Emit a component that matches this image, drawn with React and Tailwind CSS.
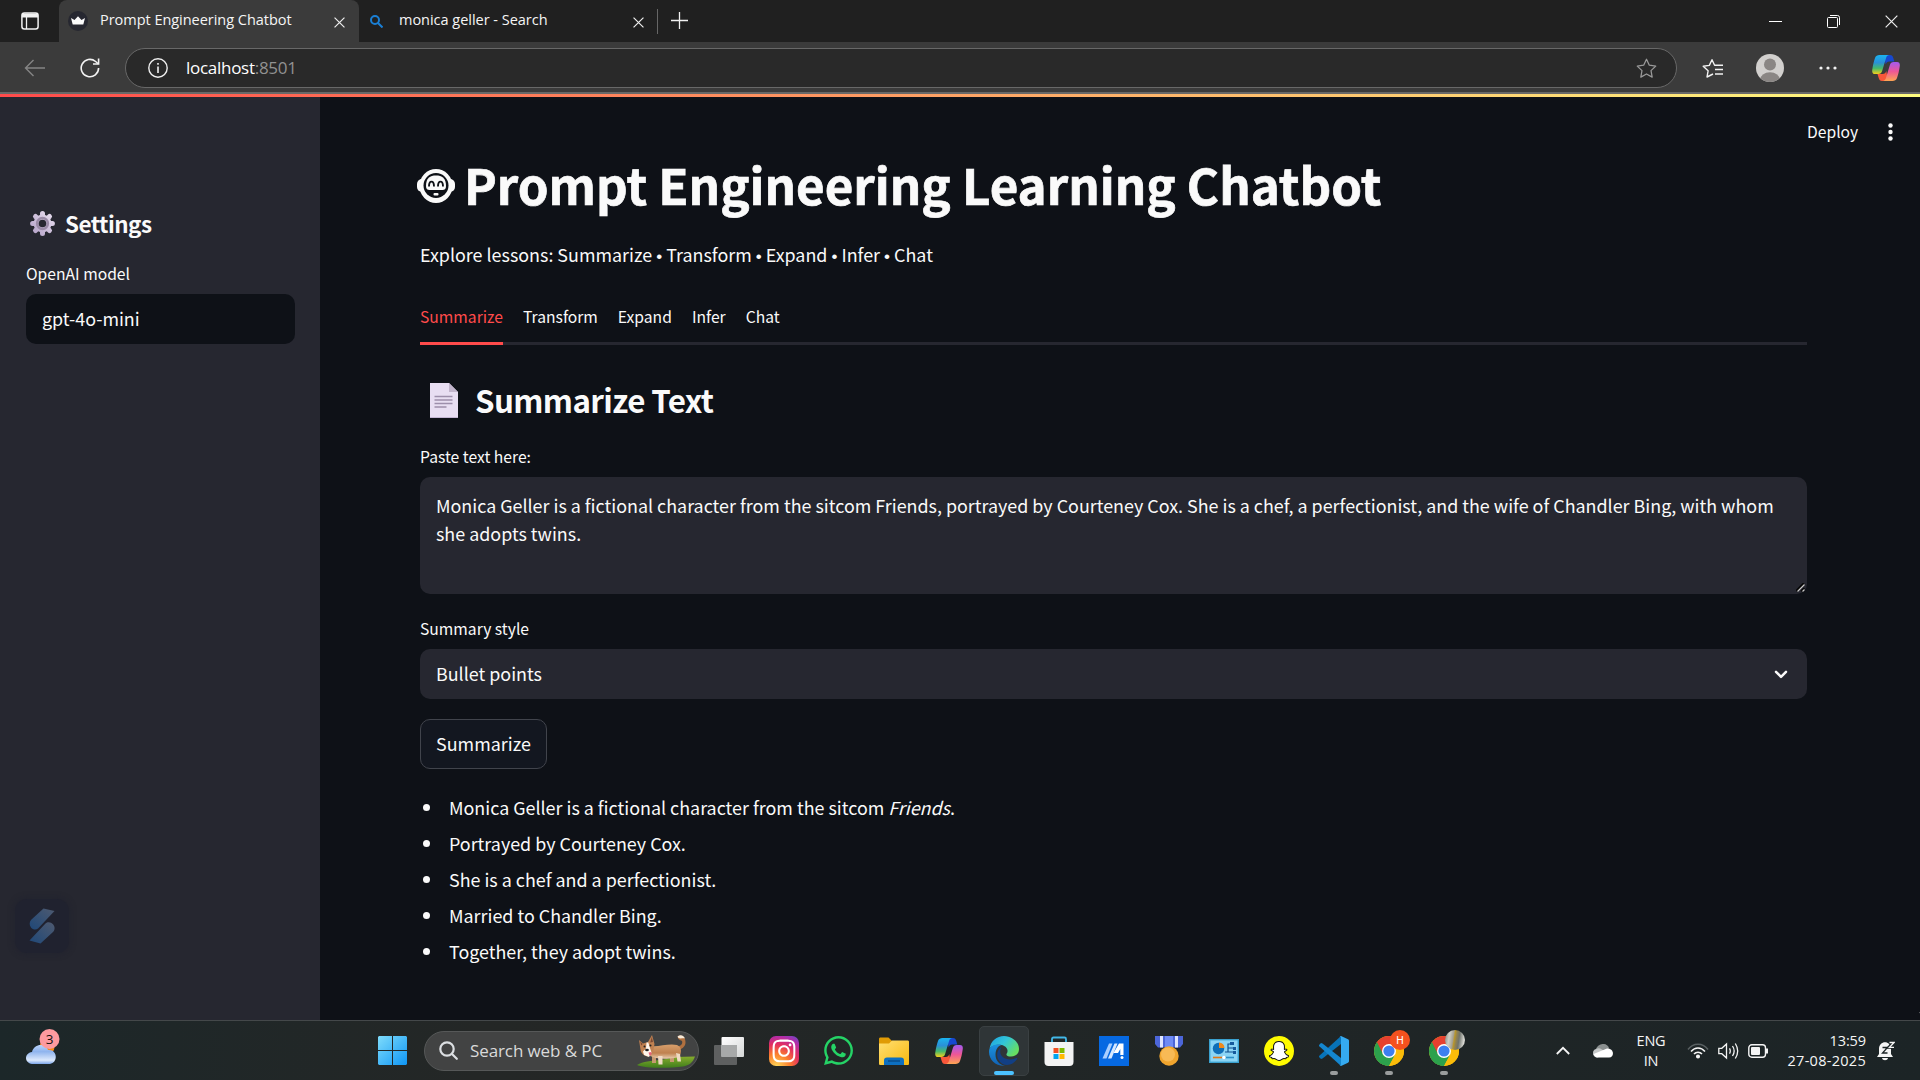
import React from "react";
import { FaInstagram, FaWhatsapp, FaSnapchatGhost, FaEdge } from "react-icons/fa";

const SEGOE = "font-['Open_Sans','Noto_Sans',sans-serif]";
const SOURCE = "font-['Noto_Sans_CJK_SC','Noto_Sans',sans-serif]";

function Close({ size = 11, sw = 1.3 }) {
  return (
    <svg width={size} height={size} viewBox="0 0 12 12" fill="none" stroke="#eee" strokeWidth={sw}>
      <path d="M.6.6 11.4 11.4M11.4.6.6 11.4" />
    </svg>
  );
}

function Copilot({ id, size }) {
  return (
    <svg width={size} height={size} viewBox="0 0 28 28">
      <defs>
        <linearGradient id={id + "a"} x1="0" y1="0" x2="0" y2="1">
          <stop offset="0" stopColor="#1ab4f0" />
          <stop offset=".4" stopColor="#2a90d8" />
          <stop offset=".7" stopColor="#45b96a" />
          <stop offset="1" stopColor="#f5cf1c" />
        </linearGradient>
        <linearGradient id={id + "b"} x1="0" y1="0" x2="0" y2="1">
          <stop offset="0" stopColor="#a35af0" />
          <stop offset=".5" stopColor="#ee5796" />
          <stop offset="1" stopColor="#fda552" />
        </linearGradient>
      </defs>
      <path d="M12 1h6c2 0 2.700 1 3.300 3l1 3.500h-5c-2 0-3 1-3.600 3z" fill="#1748cf" />
      <path d="M16 27h-6c-2 0-2.700-1-3.300-3l-1.200-4h5.200c2 0 3-1 3.600-3z" fill="#f8573a" />
      <path d="M7.500 1H17c-1.800.3-2.500 1.600-3 3.200l-3.800 12.500c-.7 2.200-1.700 3.300-4 3.300H3C.7 20-.2 18.300.3 15.500 1 11 1.700 7.500 3 4c.9-2.200 2.300-3 4.500-3z" fill={`url(#${id}a)`} />
      <path d="M20.500 27H11c1.800-.3 2.500-1.600 3-3.200l3.800-12.500c.7-2.200 1.700-3.300 4-3.300H25c2.300 0 3.200 1.700 2.700 4.500-.7 4.500-1.400 8-2.700 11.500-.9 2.200-2.300 3-4.500 3z" fill={`url(#${id}b)`} />
    </svg>
  );
}

function TabStrip() {
  return (
    <div className="flex h-[42px] bg-[#202020]">
      <div className="flex w-[59px] items-center pl-[21px] pb-[1px]">
        <svg width="18" height="18" viewBox="0 0 18 18" fill="none">
          <rect x=".9" y=".9" width="16.200" height="16.200" rx="2.500" stroke="#f2f2f2" strokeWidth="1.500" />
          <path d="M1 1.500h16v4H1z" fill="#f2f2f2" />
          <path d="M5.500 5v12" stroke="#f2f2f2" strokeWidth="1.300" />
        </svg>
      </div>
      <div className="flex w-[300px] items-center rounded-t-lg bg-[#3b3b3b] pl-[9px]">
        <svg width="20" height="20" viewBox="0 0 20 20">
          <circle cx="10" cy="10" r="10" fill="#262730" />
          <path d="M3 7l3.500 2L10 5.300 13.500 9 17 7l-1.700 6.500H4.700z" fill="#fafafa" />
        </svg>
        <span className="ml-3 w-[225px] pb-[2px] text-[14.5px] tracking-[-0.03px] whitespace-nowrap text-[#f5f5f5]">Prompt Engineering Chatbot</span>
        <span className="mt-0.5 ml-[9px]"><Close size={11} /></span>
      </div>
      <div className="flex w-[297px] items-center pl-[11px]">
        <svg width="13" height="13" viewBox="0 0 13 13" fill="none" stroke="#1a7fd4" strokeWidth="2">
          <circle cx="5" cy="5" r="4" />
          <path d="M8 8l4.500 4.500" />
        </svg>
        <span className="ml-[16px] w-[234px] pb-[2px] text-[14.5px] tracking-[-0.02px] whitespace-nowrap text-[#f5f5f5]">monica geller - Search</span>
        <span className="mt-0.5"><Close size={11} /></span>
      </div>
      <div className="mt-[9px] ml-px h-[25px] w-px bg-[#666]" />
      <svg className="mt-[12px] ml-[13px]" width="17" height="17" viewBox="0 0 17 17" stroke="#f2f2f2" strokeWidth="1.300">
        <path d="M8.500 0v17M0 8.500h17" />
      </svg>
      <div className="ml-auto flex items-center pr-[22px]">
        <div className="h-px w-[13px] bg-white" />
        <svg className="ml-[45px]" width="13" height="13" viewBox="0 0 13 13" fill="none" stroke="#fff">
          <rect x=".5" y="2.500" width="10" height="10" rx="1" />
          <path d="M3 .5h7.500a2 2 0 0 1 2 2V10" />
        </svg>
        <span className="ml-[45px]"><Close size={13} sw={1.1} /></span>
      </div>
    </div>
  );
}

const STAR = "M10 1.200l2.700 5.700 6.100.8-4.500 4.300 1.100 6.200L10 15.200l-5.400 3 1.100-6.200L1.200 7.700l6.100-.8z";

function Toolbar() {
  return (
    <div className="flex h-[50px] items-center bg-[#3b3b3b] pt-[2px]">
      <svg className="ml-[24px]" width="21" height="18" viewBox="0 0 21 18" fill="none" stroke="#858585" strokeWidth="1.400">
        <path d="M21 9H1.500M9.500 1 1.500 9l8 8" />
      </svg>
      <svg className="ml-[35px]" width="20" height="20" viewBox="0 0 20 20" fill="none" stroke="#f2f2f2" strokeWidth="1.600">
        <path d="M18.600 10a8.700 8.700 0 1 1-3-6.500L18.500 6" />
        <path d="M18.600.5V6H13" />
      </svg>
      <div className="ml-[25px] flex h-10 w-[1552px] items-center rounded-full border border-[#686868] bg-[#292929] pr-[19px] pl-[22px]">
        <svg width="20" height="20" viewBox="0 0 20 20" fill="none" stroke="#f0f0f0" strokeWidth="1.400">
          <circle cx="10" cy="10" r="9.200" />
          <path d="M10 8.500V15M10 5v1.700" strokeWidth="1.600" />
        </svg>
        <span className="ml-[18px] text-[17px] tracking-[-0.28px] text-white">localhost<span className="text-[#919191]">:8501</span></span>
        <svg className="ml-auto" width="21" height="21" viewBox="0 0 20 20" fill="none" stroke="#9a9a9a" strokeWidth="1.200" strokeLinejoin="round">
          <path d={STAR} />
        </svg>
      </div>
      <svg className="ml-[25px]" width="22" height="21" viewBox="0 0 22 20" fill="none" stroke="#f2f2f2" strokeWidth="1.400" strokeLinejoin="round">
        <path d="M11 15.500l-6 3 1.100-6.200L1.200 7.700l6.100-.8L10 1.200l2.600 5.500H21M13 11h8M13 15.500h8" />
      </svg>
      <svg className="ml-[32px]" width="28" height="28" viewBox="0 0 28 28">
        <defs><clipPath id="avatar"><circle cx="14" cy="14" r="14" /></clipPath></defs>
        <g clipPath="url(#avatar)">
          <rect width="28" height="28" fill="#d2d0ce" />
          <circle cx="14" cy="10.500" r="6" fill="#8a8684" />
          <ellipse cx="14" cy="26" rx="10" ry="7.800" fill="#8a8684" />
        </g>
      </svg>
      <svg className="ml-[35px]" width="18" height="4" viewBox="0 0 18 4" fill="#f2f2f2">
        <circle cx="2" cy="2" r="1.600" /><circle cx="9" cy="2" r="1.600" /><circle cx="16" cy="2" r="1.600" />
      </svg>
      <span className="ml-[35px]"><Copilot id="cpa" size={28} /></span>
    </div>
  );
}

function Sidebar() {
  return (
    <aside className="flex w-[320px] shrink-0 flex-col bg-[#262730] pr-[25px] pl-[26px] pt-[106px]">
      <div className="flex h-[40px] items-center pl-[4px]">
        <svg width="25" height="25" viewBox="0 0 25 25">
          <defs>
            <linearGradient id="gear" x1="1" y1="0" x2="0" y2="1">
              <stop offset="0" stopColor="#e6dcee" /><stop offset="1" stopColor="#b5a3c8" />
            </linearGradient>
          </defs>
          <g stroke="url(#gear)" strokeWidth="5" strokeLinecap="round">
            <path d="M12.500 2.600v19.801M2.600 12.500h19.801M5.500 5.500l14 14M19.500 5.500l-14 14" />
          </g>
          <circle cx="12.500" cy="12.500" r="9" fill="url(#gear)" />
          <circle cx="12.500" cy="12.500" r="5.400" fill="none" stroke="#998aa6" strokeWidth="2.500" />
          <circle cx="12.500" cy="12.500" r="3.800" fill="#262730" />
        </svg>
        <h2 className="ml-[10px] text-[22.4px] leading-[40px] font-semibold tracking-[-0.52px] text-[#fafafa]">Settings</h2>
      </div>
      <label className="mt-[19px] h-[24px] text-[15.670px] leading-[24px] text-[#fafafa]">OpenAI model</label>
      <div className="mt-[8px] flex h-[50px] items-center rounded-[10px] bg-[#0e1117] px-[16px] pb-[2px] text-[17.9px] text-[#fafafa]">gpt-4o-mini</div>
      <div className="mt-[555px] -ml-[11px] flex h-[54px] w-[54px] items-center justify-center rounded-[12px] bg-[#20222f] shadow-[0_0_5px_2px_#20222f88]">
        <svg width="26" height="36" viewBox="0 0 26 36">
          <defs>
            <linearGradient id="sw" x1="1" y1="0" x2="0" y2="1">
              <stop offset="0" stopColor="#4e5a70" /><stop offset="1" stopColor="#1f4878" />
            </linearGradient>
          </defs>
          <path d="M14.500.5 25.500 3 9 20.500c-2 1.600-5 1.300-7-1-2-2.700-1.700-5.700.5-8z" fill="url(#sw)" />
          <path d="M11.500 35.500.5 32.500 16.500 15.500c2-2 5.500-1.700 7.500.8 2.200 2.500 2 5.400 0 7.700z" fill="url(#sw)" />
        </svg>
      </div>
    </aside>
  );
}

const TABS = ["Transform", "Expand", "Infer", "Chat"];
const LESSONS = ["Transform", "Expand", "Infer", "Chat"];
const POINTS = ["Portrayed by Courteney Cox.", "She is a chef and a perfectionist.", "Married to Chandler Bing.", "Together, they adopt twins."];

function Main() {
  return (
    <main className="flex min-w-0 flex-1 bg-[#0e1117] pl-[100px] text-[17.9px] text-[#fafafa]">
      <div className="flex w-[1387px] shrink-0 flex-col pt-[54px]">
        <h1 className="-ml-[3px] flex h-[66px] items-center text-[49.25px] leading-[66px] font-bold whitespace-nowrap [-webkit-text-stroke:0.7px_#fafafa]">
          <svg className="mt-[3px] mr-[9px]" width="38" height="34" viewBox="0 0 38 34">
            <rect x="0" y="10" width="38" height="13" rx="5" fill="#fafafa" />
            <ellipse cx="19" cy="17" rx="16.500" ry="17" fill="#fafafa" />
            <ellipse cx="19" cy="16.500" rx="12.500" ry="12.500" fill="#0e1117" />
            <path d="M9 17C9 9 13 6.500 19 6.500S29 9 29 17c0 3-1.500 4-3.500 4h-13C10.500 21 9 20 9 17z" fill="#fafafa" />
            <path d="M12 17.500c0-6.500 5-6.500 5 0M21 17.500c0-6.500 5-6.500 5 0" fill="none" stroke="#0e1117" strokeWidth="1.900" />
            <rect x="16.500" y="24" width="5" height="2.600" rx="1" fill="#fafafa" />
          </svg>
          <span>Prompt Engineering Learning Chatbot</span>
        </h1>
        <p className="mt-[22px] h-[30px] leading-[30px]">
          Explore lessons: Summarize
          {LESSONS.map((l) => (
            <React.Fragment key={l}> <span className="font-['Liberation_Sans',sans-serif] text-[17px]">•</span> {l}</React.Fragment>
          ))}
        </p>
        <div className="mt-[25px] flex h-[51px] gap-5 border-b-[3px] border-[#262730] text-[15.670px] leading-[45px]">
          <span className="h-[51px] border-b-[3px] border-[#ff4b4b] text-[#ff4b4b]">Summarize</span>
          {TABS.map((t) => <span key={t}>{t}</span>)}
        </div>
        <div className="mt-[32px] flex h-[46px] items-center pl-[10px]">
          <svg className="mt-px" width="28" height="35" viewBox="0 0 28 35">
            <path d="M0 0h19l9 9v26H0z" fill="#e8def2" />
            <path d="M19 0v9h9z" fill="#c2b5cc" />
            <path d="M4.500 13.500h18M4.500 17h18M4.500 20.500h18M4.500 24h12" stroke="#9d8fab" strokeWidth="1.400" />
            <path d="M0 34.500h28" stroke="#c4b6d3" />
          </svg>
          <h2 className="ml-[17px] text-[31.3px] leading-[46px] font-semibold tracking-[-0.6px]">Summarize Text</h2>
        </div>
        <label className="mt-[22px] h-[24px] text-[15.670px] leading-[24px]">Paste text here:</label>
        <div className="relative mt-[8px] h-[117px] rounded-[10px] bg-[#262730] px-[16px] pt-[14px] leading-[28px]">
          Monica Geller is a fictional character from the sitcom Friends, portrayed by Courteney Cox. She is a chef, a perfectionist, and the wife of Chandler Bing, with whom she adopts twins.
          <svg className="absolute right-[2px] bottom-[2px]" width="9" height="9" viewBox="0 0 9 9">
            <path d="M.5 8 8 .5M5.500 8.500l3-3" stroke="#050505" strokeWidth="2.600" />
            <path d="M1.500 8.500l7-7M6.500 8.500l2-2" stroke="#ccc" strokeWidth="1.200" />
          </svg>
        </div>
        <label className="mt-[23px] h-[24px] text-[15.670px] leading-[24px]">Summary style</label>
        <div className="mt-[8px] flex h-[50px] items-center justify-between rounded-[10px] bg-[#262730] pr-[19px] pl-[16px]">
          <span className="pb-[2px]">Bullet points</span>
          <svg width="14" height="9" viewBox="0 0 14 9" fill="none" stroke="#fafafa" strokeWidth="2.500" strokeLinecap="round" strokeLinejoin="round">
            <path d="M2 1.800 7 6.800l5-5" />
          </svg>
        </div>
        <button className="mt-[20px] flex h-[50px] w-[127px] items-center justify-center rounded-[10px] border border-[#41444c] bg-[#131720] pb-[2px]">Summarize</button>
        <ul className="mt-[20px] flex flex-col leading-[36px]">
          <li className="flex items-center"><span className="mr-[19px] ml-[3px] h-[7px] w-[7px] rounded-full bg-[#fafafa]" /><span>Monica Geller is a fictional character from the sitcom <em>Friends</em>.</span></li>
          {POINTS.map((p) => (
            <li key={p} className="flex items-center"><span className="mr-[19px] ml-[3px] h-[7px] w-[7px] rounded-full bg-[#fafafa]" /><span>{p}</span></li>
          ))}
        </ul>
      </div>
      <div className="ml-auto flex flex-col items-end">
        <div className="flex items-center gap-[30px] pt-[23px] pr-[37px]">
          <span className="text-[15.670px] leading-[24px]">Deploy</span>
          <svg width="5" height="18" viewBox="0 0 5 18" fill="#fafafa">
            <circle cx="2.500" cy="2.500" r="2.200" /><circle cx="2.500" cy="9" r="2.200" /><circle cx="2.500" cy="15.500" r="2.200" />
          </svg>
        </div>
        <div className="mt-[30px] mr-[3px] h-[717px] w-[7px] rounded-full bg-[#6b6c6f]" />
        <svg className="mt-auto mr-[2px] mb-[2px]" width="9" height="6" viewBox="0 0 9 6" fill="#77797c"><path d="M0 0h9L5.500 5.500h-2z" /></svg>
      </div>
    </main>
  );
}

function Corgi() {
  return (
    <svg width="58" height="34" viewBox="0 0 58 34">
      <defs>
        <linearGradient id="grass" x1="0" y1="0" x2="0" y2="1"><stop offset="0" stopColor="#86ac2c" /><stop offset="1" stopColor="#3f7d1c" /></linearGradient>
        <linearGradient id="fur" x1="0" y1="0" x2="0" y2="1"><stop offset="0" stopColor="#d79f6c" /><stop offset=".6" stopColor="#bf814f" /><stop offset="1" stopColor="#e9cfb2" /></linearGradient>
      </defs>
      <path d="M0 31c6-4 14-4 24-5l14-3 20-.5c-2 6-6 9-12 10-14 2-38 2-46-1.500z" fill="url(#grass)" />
      <path d="M39 13c5-1 7-3 6-6-2-1-5-2-4-5 4-2 8 2 7.500 7-.5 4-4 6-7 7z" fill="#b0703f" />
      <path d="M40.500 2.500c3-2.500 6.500-1 7.500 2-2-.5-5 .5-6.500-.5z" fill="#f7ead9" />
      <path d="M15 29v-7h4v7zM33 28v-6h4v6z" fill="#c69a70" />
      <path d="M14 12c8 1 18-3 26-1 5 2 5 8 2 12l-5 1c-7 1-12 1-18 0l-6-2z" fill="url(#fur)" />
      <path d="M21 22h4.500v8.500h-4zM39 19l4 1 1 7.500h-3.500z" fill="#efdac3" />
      <path d="M2 6l4 3.500L11 8l4-7 2.500 9-1.500 8-5 4.500c-4-.5-7-3-7.500-7z" fill="#c08151" />
      <path d="M9.500 8.500l1.800 0 1.700 5.500 1.500 4.500-2.500 4.500-5-2-1-3.500 3-3z" fill="#fff6ec" />
      <path d="M14.800 3l1.200 5-2.800.5zM3.200 7.500l2.500 2.500-1.500 1.500z" fill="#7a4a35" />
      <circle cx="7.500" cy="12.500" r="1" fill="#222" /><circle cx="13.500" cy="11.500" r="1" fill="#222" /><ellipse cx="10" cy="16" rx="1.900" ry="1.300" fill="#222" />
      <path d="M11.500 18.500l3-.5-.3 3-1.700.5z" fill="#e8607b" />
    </svg>
  );
}

function Chrome({ id, children }) {
  return (
    <svg width="38" height="40" viewBox="0 0 38 40" className="-mt-[10px] -mr-[8px]">
      <defs>
        <clipPath id={id}><circle cx="15" cy="25" r="15" /></clipPath>
        <linearGradient id={id + "p"} x1="0" y1="0" x2="1" y2=".15"><stop offset="0" stopColor="#7f837a" /><stop offset=".25" stopColor="#cfcfc6" /><stop offset=".45" stopColor="#a5a090" /><stop offset=".52" stopColor="#b8962a" /><stop offset=".62" stopColor="#8f8050" /><stop offset=".75" stopColor="#6f736c" /><stop offset="1" stopColor="#d8d8d2" /></linearGradient>
      </defs>
      <g clipPath={`url(#${id})`}>
        <rect y="10" width="30" height="30" fill="#fbbc09" />
        <path d="M15 25 9 28.500-3 10h40v8H15z" fill="#e6402f" />
        <path d="M2 14v28h12l7-13.500-6-3.500-6 3.500z" fill="#2ca14c" />
        <path d="M-2 10v32h15l7-11-5-3-6 0L2 16z" fill="#2ca14c" />
        <path d="M21.100 28.500 14 42h18V18H15z" fill="#fbbc09" />
      </g>
      <circle cx="15" cy="25" r="7" fill="#fff" />
      <circle cx="15" cy="25" r="5.600" fill="#3d7ff0" />
      {children === "H" ? (
        <>
          <circle cx="26" cy="14" r="10" fill="#f4511e" />
          <text x="26" y="18" textAnchor="middle" fontSize="10.500" fill="#fff" fontFamily="Roboto, sans-serif">H</text>
        </>
      ) : (
        <circle cx="26" cy="14" r="10" fill={`url(#${id}p)`} />
      )}
    </svg>
  );
}

function Slot({ children, active, running }) {
  return (
    <div className="flex w-[55px] justify-center">
      <div className={active ? "flex h-[50px] w-[50px] flex-col items-center rounded-[5px] border border-[#3a4042] bg-[#2f3537] pt-[9px]" : "flex h-[50px] w-[50px] flex-col items-center border border-transparent pt-[9px]"}>
        <div className="flex h-[30px] items-center">{children}</div>
        {active && <div className="mt-[5px] h-[4px] w-[20px] shrink-0 rounded-full bg-[#4cc2ff]" />}
        {running && <div className="mt-[5px] h-[4px] w-[8px] shrink-0 rounded-full bg-[#9a9d9d]" />}
      </div>
    </div>
  );
}

function Taskbar() {
  return (
    <footer className={`${SEGOE} flex h-[60px] items-center border-t border-[#44484a] bg-linear-to-r from-[#1c2729] via-[#242726] via-25% to-[#1c2426] text-[#f5f5f5]`}>
      <svg className="-mt-[10px] ml-[26px]" width="36" height="36" viewBox="0 0 36 36">
        <defs><linearGradient id="cl" x1="0" y1="0" x2="0" y2="1"><stop offset="0" stopColor="#b9d4fb" /><stop offset=".35" stopColor="#8fb4ee" /><stop offset=".8" stopColor="#dce9fc" /><stop offset="1" stopColor="#7ba6ea" /></linearGradient></defs>
        <circle cx="21" cy="19" r="7.500" fill="#f48b1a" />
        <path d="M6 36c-8-1-8-11 0-12 2-9 14-9 16-2 10-1 10 13 2 14z" fill="url(#cl)" />
        <circle cx="23.500" cy="11" r="10" fill="#fd9a9f" />
        <text x="23.500" y="16" textAnchor="middle" fontSize="13.500" fill="#111" fontFamily="'Open Sans', sans-serif">3</text>
      </svg>
      <svg className="ml-[316px]" width="29" height="29" viewBox="0 0 29 29">
        <defs><linearGradient id="win" x1="0" y1="0" x2="1" y2="1"><stop offset="0" stopColor="#7fdcfb" /><stop offset="1" stopColor="#0f96f5" /></linearGradient></defs>
        <path d="M1 0h13v14H0V1zM15 0h13l1 1v13H15zM0 15h14v14H1l-1-1zM15 15h14v13l-1 1H15z" fill="url(#win)" />
      </svg>
      <div className="ml-[17px] flex h-10 w-[275px] items-center rounded-full border border-[#565858] bg-[#424343] pr-[3px] pl-[14px]">
        <svg width="19" height="19" viewBox="0 0 19 19" fill="none" stroke="#dcdfe2" strokeWidth="2.200" strokeLinecap="round">
          <circle cx="8" cy="8" r="6.700" /><path d="M13 13l4.800 4.800" />
        </svg>
        <span className="ml-[12px] text-[17px] tracking-[-0.1px] whitespace-nowrap text-[#dadada]">Search web &amp; PC</span>
        <span className="ml-auto"><Corgi /></span>
      </div>
      <div className="ml-[2px] flex">
        <Slot>
          <svg width="30" height="28" viewBox="0 0 30 28">
            <defs><linearGradient id="tv" x1="0" y1="0" x2="1" y2="1"><stop offset="0" stopColor="#fff" /><stop offset="1" stopColor="#d5d7d7" /></linearGradient></defs>
            <rect y="8" width="23" height="20" rx="1" fill="#5e6060" /><rect x="7.500" width="22.500" height="20" rx="1" fill="url(#tv)" /><path d="M7.500 8H23v12H7.500z" fill="#a7a9a9" />
          </svg>
        </Slot>
        <Slot>
          <div className="flex h-[30px] w-[30px] items-center justify-center rounded-[7px] bg-[radial-gradient(circle_at_25%_105%,#ffd257_5%,#fb7e2d_35%,#e3305f_60%,#b52ca5_80%,#5a4fd3_100%)]"><FaInstagram size={26} color="#fff" /></div>
        </Slot>
        <Slot><FaWhatsapp size={33} color="#25d366" /></Slot>
        <Slot>
          <svg width="30" height="28" viewBox="0 0 30 28">
            <defs><linearGradient id="fo" x1="0" y1="0" x2="1" y2="1"><stop offset="0" stopColor="#ffdf73" /><stop offset="1" stopColor="#f8b90e" /></linearGradient></defs>
            <path d="M0 2c0-1 .5-1.500 1.500-1.500h8L13 4v5H0z" fill="#e09b05" /><path d="M0 6.500h10L13 3.500h15.500c1 0 1.500.5 1.500 1.500v21.500c0 1-.5 1.500-1.500 1.500H1.500C.5 28 0 27.500 0 26.500z" fill="url(#fo)" /><path d="M5 28v-4.500c0-2 1-3 3-3h14c2 0 3 1 3 3V28z" fill="#0d6fc0" /><path d="M9 24h12" stroke="#07437c" strokeWidth="1.200" />
          </svg>
        </Slot>
        <Slot><Copilot id="cpb" size={28} /></Slot>
        <Slot active>
          <svg width="30" height="30" viewBox="0 0 30 30">
            <defs>
              <linearGradient id="e1" x1="0" y1="0" x2="1" y2=".6"><stop offset="0" stopColor="#1b9fe0" /><stop offset=".5" stopColor="#32c5d8" /><stop offset="1" stopColor="#67df61" /></linearGradient>
              <linearGradient id="e2" x1="0" y1="0" x2="0" y2="1"><stop offset="0" stopColor="#1b92df" /><stop offset="1" stopColor="#1161b4" /></linearGradient>
            </defs>
            <path d="M.5 13C1.500 5 8 0 15 0c8 0 15 6 15 13 0 5-3.500 7.500-8 7.500-3.500 0-5-1.300-4.500-2.500 2.500-3 .5-8-5-9C7 8.300 2 10 .5 13z" fill="url(#e1)" />
            <path d="M.4 13C2.500 9 8 7.800 12.500 9c-4 1-6 5-6 9.500 0 6 4 10.500 9.500 11.300C7 30.500 0 24 0 16c0-1 .1-2 .4-3z" fill="url(#e2)" />
            <path d="M12.500 11c-4 2-5.500 8-3.200 12.500C12 28.500 17 30 21 28.600c3-1.100 5.500-3 7.200-5.900.3-.6-.2-1-.8-.7C20 25.500 11 22 11.200 15.500c0-1.800.5-3.300 1.300-4.500z" fill="#123f84" />
          </svg>
        </Slot>
        <Slot>
          <svg width="30" height="30" viewBox="0 0 30 30">
            <path d="M8 8V3c0-1 .5-1.500 1.500-1.500h11C21.500 1.500 22 2 22 3v5" fill="none" stroke="#42b8e8" strokeWidth="1.800" /><path d="M.5 6h29v20c0 2.500-1.500 4-4 4h-21c-2.500 0-4-1.500-4-4z" fill="#f3f3f3" />
            <path d="M9.500 12h5v5h-5z" fill="#f25022" /><path d="M15.500 12h5v5h-5z" fill="#7fba00" /><path d="M9.500 18h5v5h-5z" fill="#00a4ef" /><path d="M15.500 18h5v5h-5z" fill="#ffb900" />
          </svg>
        </Slot>
        <Slot>
          <svg width="30" height="30" viewBox="0 0 30 30">
            <rect width="30" height="30" fill="#0669e2" /><path d="M3.500 22.500 10 7.500h3.500L7.500 22.500z" fill="#a9cfff" /><path d="M9 22.500 15.500 7.500h3L12.500 22.500z" fill="#d6e8ff" /><path d="M14.500 17 20 7.500h4.500V19h-3.200v-6l-2.300 4z" fill="#fff" /><circle cx="23" cy="21.500" r="1.500" fill="#fff" />
          </svg>
        </Slot>
        <Slot>
          <svg width="30" height="30" viewBox="0 0 30 30">
            <path d="M1 0h28v8l-3 3.500H4L1 8z" fill="#4c66d9" /><path d="M6 0h3v11.500H6zM21 0h3v11.500h-3z" fill="#dfe5ff" /><path d="M11 0h8v11.500h-8z" fill="#6f8bf5" /><circle cx="15" cy="20" r="9.700" fill="#f0a52e" /><circle cx="14" cy="18.500" r="7" fill="#f8ba55" />
          </svg>
        </Slot>
        <Slot>
          <svg width="30" height="24" viewBox="0 0 30 24">
            <rect x=".7" y=".7" width="28.600" height="22.600" fill="#8bd5f5" stroke="#3aa1cf" strokeWidth="1.400" /><circle cx="9.500" cy="9.500" r="5.700" fill="#0f6fb8" /><path d="M10 9V3.500a5.500 5.500 0 0 1 5.500 5.500z" fill="#f08a1c" /><path d="M16 13h3V5h2M19 9h5M19 13h5" stroke="#10518f" strokeWidth="1.200" fill="none" /><path d="M21 3h4v3h-4zM24 8h3v3h-3zM24 12h3v3h-3z" fill="#155a9c" /><path d="M4 18.500h9" stroke="#e37713" strokeWidth="1.600" /><path d="M16 18.500h9" stroke="#2a8fc7" strokeWidth="1.600" /><circle cx="15" cy="18.500" r="1.700" fill="#fff" />
          </svg>
        </Slot>
        <Slot><div className="flex h-[30px] w-[30px] items-center justify-center rounded-full bg-[#fffc00]"><FaSnapchatGhost size={20} color="#fff" stroke="#111" strokeWidth={26} /></div></Slot>
        <Slot running>
          <svg width="30" height="30" viewBox="0 0 30 30">
            <path d="M22 0v8L3.500 22.500 2 23 .3 21.200c-.4-.5-.4-1 0-1.500z" fill="#0873b8" /><path d="M22 30v-8L3.500 7.500 2 7 .3 8.800c-.4.5-.4 1 0 1.500z" fill="#1486cf" /><path d="M20.500 0 22 .1l7 3.200c.7.4 1 .8 1 1.600v20.200c0 .8-.3 1.200-1 1.600L22 29.900l-1.500.1c1 0 1.500-1 1.500-2V2c0-1-.5-2-1.500-2z" fill="#35aaf0" />
          </svg>
        </Slot>
        <Slot running><Chrome id="c1">H</Chrome></Slot>
        <Slot running><Chrome id="c2" /></Slot>
      </div>
      <div className="ml-auto flex items-center pr-[25px]">
        <svg width="14" height="9" viewBox="0 0 14 9" fill="none" stroke="#f5f5f5" strokeWidth="1.800"><path d="M.8 8 7 1.800 13.200 8" /></svg>
        <svg className="ml-[23px]" width="20" height="14" viewBox="0 0 20 14">
          <path d="M3 5c2-6 11-7 13-1l-6 5z" fill="#8b9090" /><path d="M5 13.500C-1 13.500-1.500 6 3 5c3-2 6 0 8 2z" fill="#c4c7c7" /><path d="M5 13.500c-3 0-4-2-4.500-3.500L14 4.500c7-.5 8 8.500 2 9z" fill="#fff" />
        </svg>
        <div className="ml-[22px] flex w-[32px] flex-col items-center text-[14.5px] leading-[20px] tracking-[-0.2px]"><span>ENG</span><span>IN</span></div>
        <svg className="ml-[20px]" width="22" height="16" viewBox="0 0 22 16" fill="none" stroke="#f5f5f5" strokeWidth="1.500">
          <path d="M1 6.500C6-.5 16-.5 21 6.500" stroke="#596062" /><path d="M4 8.500c4-4.700 10-4.700 14 0M7 11c2-2.500 6-2.500 8 0" /><circle cx="11" cy="13.500" r="1.300" fill="#f5f5f5" />
        </svg>
        <svg className="ml-[9px]" width="21" height="18" viewBox="0 0 21 18" fill="none" stroke="#f5f5f5" strokeWidth="1.300">
          <path d="M.8 6.300h3L8.500 2v14L3.800 11.700h-3zM11.500 6.300c1 1.700 1 3.700 0 5.400M14.500 4c2 3 2 7 0 10M17.300 1.500c3 4.700 3 10.300 0 15" />
        </svg>
        <svg className="ml-[9px]" width="21" height="14" viewBox="0 0 21 14" fill="none" stroke="#f5f5f5" strokeWidth="1.400">
          <rect x=".8" y=".8" width="16.700" height="12.400" rx="3" /><rect x="3" y="3" width="9" height="8" rx="1" fill="#f5f5f5" stroke="none" /><path d="M19 4.500v5" strokeWidth="2" />
        </svg>
        <div className="ml-[15px] flex w-[82px] flex-col items-end text-[14.5px] leading-[20px] whitespace-nowrap"><span className="tracking-[-0.1px]">13:59</span><span className="tracking-[0.28px]">27-08-2025</span></div>
        <svg className="ml-[11px]" width="18" height="20" viewBox="0 0 18 20">
          <path d="M2 8c0-9 12-9 12 0v5l2 3H0l2-3z" fill="#f5f5f5" /><path d="M5 17h6c-.5 3-5.500 3-6 0z" fill="#f5f5f5" /><path d="M5.500 6.500h5l-5 5.500h5" fill="none" stroke="#1c2426" strokeWidth="1.300" /><path d="M12 1.500h5L12.500 6H17" fill="none" stroke="#1c2426" strokeWidth="3.500" /><path d="M12.500 1.500h4.500l-4.500 4.800h4.500" fill="none" stroke="#f5f5f5" strokeWidth="1.300" />
        </svg>
      </div>
    </footer>
  );
}

export default function App() {
  return (
    <div className="flex h-[1080px] w-[1920px] flex-col overflow-hidden bg-[#0e1117]">
      <div className={SEGOE}>
        <TabStrip />
        <Toolbar />
      </div>
      <div className="h-[2px] bg-[#686868]" />
      <div className="h-[3px] bg-[linear-gradient(90deg,#ff4b4b,#fffd80)]" />
      <div className={`${SOURCE} flex min-h-0 flex-1`}>
        <Sidebar />
        <Main />
      </div>
      <Taskbar />
    </div>
  );
}
